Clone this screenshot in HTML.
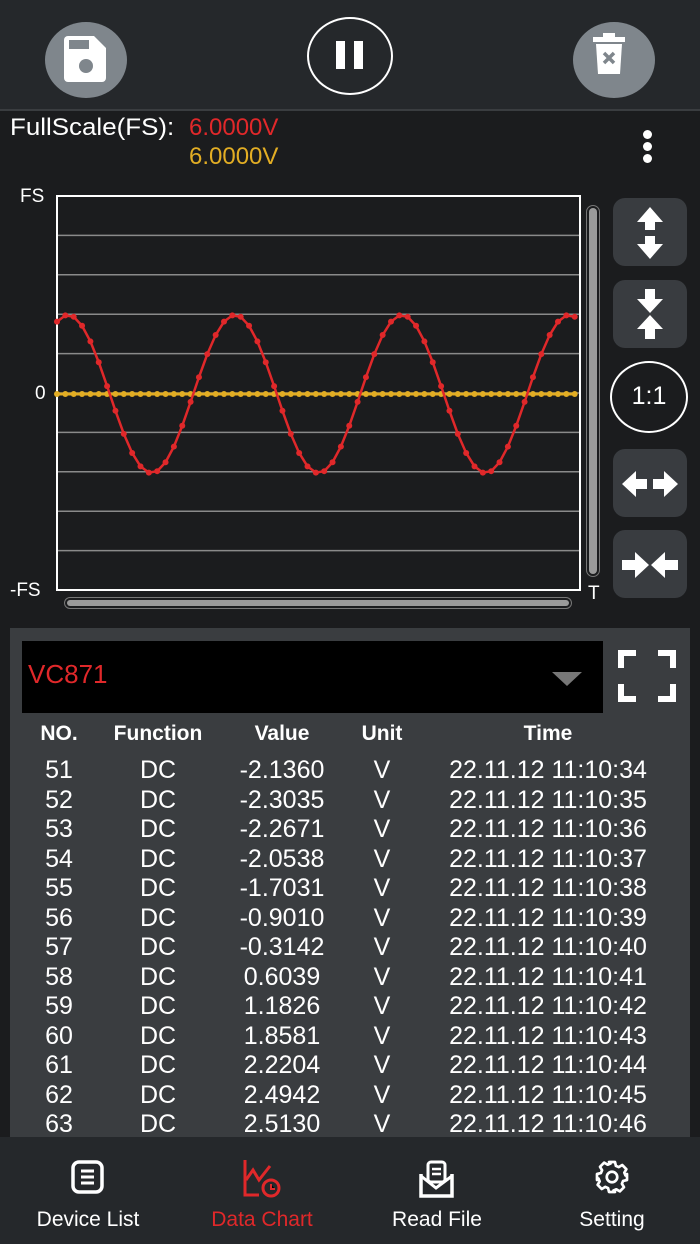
<!DOCTYPE html>
<html><head><meta charset="utf-8"><style>
*{margin:0;padding:0;box-sizing:border-box}
body{width:700px;height:1244px;background:#1b1c1e;font-family:"Liberation Sans",sans-serif;color:#fff;position:relative;overflow:hidden}
.abs{position:absolute}
.top{left:0;top:0;width:700px;height:111px;background:#25282b;border-bottom:2px solid #3a3d40}
.cbtn{width:82px;height:76px;border-radius:50%;background:#7f868c}
.rb{left:613px;width:74px;height:68px;background:#393c40;border-radius:12px}
.panel{left:10px;top:628px;width:680px;height:510px;background:#3a3d40}
.nav{left:0;top:1137px;width:700px;height:107px;background:#25282b}
.row{position:absolute;left:0;width:700px;font-size:22px;height:30px}
.row span{position:absolute;transform:translateX(-50%);white-space:nowrap}
.nl{position:absolute;top:1208px;font-size:21px;transform:translateX(-50%);white-space:nowrap}
</style></head><body>
<div class="abs top"></div>
<div class="abs cbtn" style="left:45px;top:22px"></div>
<svg class="abs" style="left:62px;top:34px" width="48" height="50"><path d="M2 6 a4 4 0 0 1 4-4 h26 l12 12 v30 a4 4 0 0 1-4 4 h-34 a4 4 0 0 1-4-4z" fill="#fff"/><rect x="7" y="6" width="20" height="9" fill="#7f868c"/><ellipse cx="24" cy="32" rx="7" ry="7" fill="#7f868c"/></svg>
<div class="abs" style="left:307px;top:17px;width:86px;height:78px;border:2px solid #fff;border-radius:50%"></div>
<div class="abs" style="left:336px;top:41px;width:9px;height:28px;background:#fff"></div>
<div class="abs" style="left:354px;top:41px;width:9px;height:28px;background:#fff"></div>
<div class="abs cbtn" style="left:573px;top:22px"></div>
<svg class="abs" style="left:592px;top:32px" width="44" height="50"><rect x="1" y="5" width="32" height="5" fill="#fff"/><rect x="11" y="1" width="12" height="5" fill="#fff"/><path d="M4 12 h26 l-2 30 h-22z" fill="#fff"/><path d="M12 21 l10 10 M22 21 l-10 10" stroke="#7f868c" stroke-width="3.5"/></svg>

<div class="abs" style="left:10px;top:114px;font-size:24px;transform:scaleX(1.08);transform-origin:left">FullScale(FS):</div>
<div class="abs" style="left:189px;top:114px;font-size:24px;color:#e0282a">6.0000V</div>
<div class="abs" style="left:189px;top:143px;font-size:24px;color:#e2ad24">6.0000V</div>
<div class="abs" style="left:643px;top:130px;width:9px;height:9px;border-radius:50%;background:#fff"></div>
<div class="abs" style="left:643px;top:142px;width:9px;height:9px;border-radius:50%;background:#fff"></div>
<div class="abs" style="left:643px;top:154px;width:9px;height:9px;border-radius:50%;background:#fff"></div>

<div class="abs" style="left:20px;top:186px;font-size:19px">FS</div>
<div class="abs" style="left:35px;top:383px;font-size:19px">0</div>
<div class="abs" style="left:10px;top:580px;font-size:19px">-FS</div>
<div class="abs" style="left:588px;top:583px;font-size:19px">T</div>
<svg id="ch" class="abs" style="left:0;top:0" width="700" height="620"></svg>
<div class="abs" style="left:586px;top:205px;width:14px;height:372px;border:1.5px solid #777;border-radius:7px;padding:2px"><div style="width:100%;height:100%;background:#9a9a9a;border-radius:5px"></div></div>
<div class="abs" style="left:64px;top:597px;width:508px;height:12px;border:1.5px solid #777;border-radius:6px;padding:2px"><div style="width:100%;height:100%;background:#9a9a9a;border-radius:4px"></div></div>

<div class="abs rb" style="top:198px"></div>
<svg class="abs" style="left:634px;top:206px" width="32" height="54"><path d="M16 1 L29 16 H21 V24 H11 V16 H3Z M16 53 L29 38 H21 V30 H11 V38 H3Z" fill="#fff"/></svg>
<div class="abs rb" style="top:280px"></div>
<svg class="abs" style="left:634px;top:287px" width="32" height="54"><path d="M16 26 L29 12 H21 V2 H11 V12 H3Z M16 28 L29 42 H21 V52 H11 V42 H3Z" fill="#fff"/></svg>
<div class="abs" style="left:610px;top:361px;width:78px;height:72px;border:2.5px solid #fff;border-radius:50%;font-size:25px;text-align:center;line-height:67px">1:1</div>
<div class="abs rb" style="top:449px"></div>
<svg class="abs" style="left:621px;top:468px" width="58" height="32"><path d="M1 16 L15 3 V11 H26 V21 H15 V29Z M57 16 L43 3 V11 H32 V21 H43 V29Z" fill="#fff"/></svg>
<div class="abs rb" style="top:530px"></div>
<svg class="abs" style="left:621px;top:549px" width="58" height="32"><path d="M28 16 L14 3 V11 H1 V21 H14 V29Z M30 16 L44 3 V11 H57 V21 H44 V29Z" fill="#fff"/></svg>

<div class="abs panel"></div>
<div class="abs" style="left:22px;top:641px;width:581px;height:72px;background:#000"></div>
<div class="abs" style="left:28px;top:659px;font-size:26px;color:#e0282a">VC871</div>
<div class="abs" style="left:552px;top:672px;width:0;height:0;border-left:15px solid transparent;border-right:15px solid transparent;border-top:14px solid #777"></div>
<svg class="abs" style="left:618px;top:650px" width="58" height="52"><path d="M3 18 V3 H18 M40 3 H55 V18 M55 34 V49 H40 M18 49 H3 V34" stroke="#fff" stroke-width="6" fill="none"/></svg>

<div class="row" style="top:722px;font-weight:bold;font-size:21px"><span style="left:59px">NO.</span><span style="left:158px">Function</span><span style="left:282px">Value</span><span style="left:382px">Unit</span><span style="left:548px">Time</span></div>
<div id="rows"></div>

<div class="abs nav"></div>
<svg class="abs" style="left:70px;top:1160px" width="36" height="36"><rect x="3" y="2" width="29" height="30" rx="6" stroke="#fff" stroke-width="3.5" fill="none"/><path d="M11 11 H24 M11 17 H24 M11 23 H24" stroke="#fff" stroke-width="3"/></svg>
<svg class="abs" style="left:242px;top:1158px" width="40" height="40"><path d="M3 2 V37 H17" stroke="#e0282a" stroke-width="3" fill="none"/><path d="M4 22 L11 12 L17 22 L28 8" stroke="#e0282a" stroke-width="3" fill="none"/><circle cx="29" cy="30" r="8" stroke="#e0282a" stroke-width="3" fill="none"/><path d="M29 26 V31 H33" stroke="#e0282a" stroke-width="2"/></svg>
<svg class="abs" style="left:419px;top:1160px" width="36" height="38"><path d="M2 14 V36 H33 V14" stroke="#fff" stroke-width="3.5" fill="none"/><path d="M2 16 L17 28 L33 16" stroke="#fff" stroke-width="3" fill="none"/><rect x="9" y="2" width="17" height="20" rx="3" stroke="#fff" stroke-width="3" fill="#25282b"/><path d="M13 9 H22 M13 14 H22" stroke="#fff" stroke-width="2.5"/></svg>
<svg class="abs" style="left:594px;top:1159px" width="36" height="36" viewBox="0 0 24 24"><path d="M10 2h4l.6 2.6 1.9.8 2.3-1.4 2.8 2.8-1.4 2.3.8 1.9L22 10v4l-2.6.6-.8 1.9 1.4 2.3-2.8 2.8-2.3-1.4-1.9.8L14 22h-4l-.6-2.6-1.9-.8-2.300 1.4-2.8-2.8 1.4-2.3-.8-1.9L2 14v-4l2.6-.6.8-1.9L4 5.2 6.8 2.4l2.3 1.4 1.9-.8z" stroke="#fff" stroke-width="1.8" fill="none" stroke-linejoin="round"/><circle cx="12" cy="12" r="3.5" stroke="#fff" stroke-width="1.8" fill="none"/></svg>
<div class="nl" style="left:88px">Device List</div>
<div class="nl" style="left:262px;color:#e0282a">Data Chart</div>
<div class="nl" style="left:437px">Read File</div>
<div class="nl" style="left:612px">Setting</div>

<script>
var s='<rect x="57" y="196" width="523" height="394" fill="#1b1c1e" stroke="#fff" stroke-width="2"/>';
for(var i=1;i<10;i++){var y=196+i*39.4;s+='<line x1="58" x2="579" y1="'+y+'" y2="'+y+'" stroke="#8a8a8a" stroke-width="1.5"/>';}
var pts=[],yp=[];
for(var k=0;k<63;k++){var x=57+k*8.35;pts.push([x,394-79*Math.cos(2*Math.PI*(x-68)/167)]);yp.push([x,394]);}
s+='<polyline points="'+yp.map(p=>p.join(',')).join(' ')+'" stroke="#e2ad24" stroke-width="3" fill="none"/>';
yp.forEach(p=>s+='<circle cx="'+p[0]+'" cy="394" r="3" fill="#e2ad24"/>');
s+='<polyline points="'+pts.map(p=>p.join(',')).join(' ')+'" stroke="#e0282a" stroke-width="2.5" fill="none"/>';
pts.forEach(p=>s+='<circle cx="'+p[0]+'" cy="'+p[1]+'" r="3" fill="#e0282a"/>');
document.getElementById('ch').innerHTML=s;
var v=['-2.1360','-2.3035','-2.2671','-2.0538','-1.7031','-0.9010','-0.3142','0.6039','1.1826','1.8581','2.2204','2.4942','2.5130'];
var h='';
for(var i=0;i<13;i++){h+='<div class="row" style="font-size:25px;top:'+(756+i*29.5)+'px"><span style="left:59px">'+(51+i)+'</span><span style="left:158px">DC</span><span style="left:282px">'+v[i]+'</span><span style="left:382px">V</span><span style="left:548px">22.11.12 11:10:'+(34+i)+'</span></div>';}
document.getElementById('rows').innerHTML=h;
</script>
</body></html>
